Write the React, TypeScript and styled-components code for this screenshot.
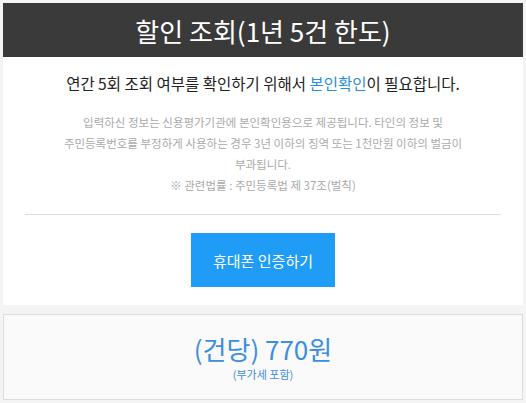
import React from 'react'
import styled, { createGlobalStyle } from 'styled-components'

const Global = createGlobalStyle`
  html, body {
    margin: 0;
    padding: 0;
    background: #f4f4f4;
  }
  body {
    font-family: "Noto Sans CJK KR", "Noto Sans", sans-serif;
  }
`
const Page = styled.div`
  padding: 3px 3px 3px 3px;
  min-height: 403px;
  box-sizing: border-box;
`
const Header = styled.h1`
  margin: 0;
  height: 54px;
  background: #3a3a3a;
  color: #fff;
  font-size: 26px;
  font-weight: 400;
  display: flex;
  align-items: center;
  justify-content: center;
`
const Card = styled.div`
  background: #fff;
  padding: 0 22px 18px;
`
const Lead = styled.p`
  margin: 0;
  padding-top: 15px;
  text-align: center;
  font-size: 15.5px;
  color: #222;
  line-height: 22px;
`
const Link = styled.span`
  color: #2a8ee0;
`
const Notice = styled.div`
  margin-top: 18px;
  text-align: center;
  font-size: 11.5px;
  line-height: 21px;
  color: #aaa;
  padding-bottom: 18px;
  border-bottom: 1px solid #ddd;
`
const Line = styled.p`
  margin: 0;
`
const ButtonRow = styled.div`
  display: flex;
  justify-content: center;
  padding-top: 18px;
`
const Button = styled.button`
  width: 144px;
  height: 54px;
  border: 0;
  background: #1e9cf6;
  color: #fff;
  font-family: inherit;
  font-size: 15px;
  cursor: pointer;
`
const Price = styled.div`
  margin-top: 9px;
  height: 86px;
  box-sizing: border-box;
  border: 1px solid #dcdcdc;
  background: #fafafa;
  display: flex;
  flex-direction: column;
  align-items: center;
  justify-content: center;
  color: #3d8ee0;
`
const Amount = styled.div`
  font-size: 26px;
  line-height: 30px;
`
const Vat = styled.div`
  margin-top: 3px;
  font-size: 11px;
  line-height: 14px;
`

const App = () => (
  <Page>
    <Global />
    <Header>할인 조회(1년 5건 한도)</Header>
    <Card>
      <Lead>
        연간 5회 조회 여부를 확인하기 위해서 <Link>본인확인</Link>이 필요합니다.
      </Lead>
      <Notice>
        <Line>입력하신 정보는 신용평가기관에 본인확인용으로 제공됩니다. 타인의 정보 및</Line>
        <Line>주민등록번호를 부정하게 사용하는 경우 3년 이하의 징역 또는 1천만원 이하의 벌금이</Line>
        <Line>부과됩니다.</Line>
        <Line>※ 관련법률 : 주민등록법 제 37조(벌칙)</Line>
      </Notice>
      <ButtonRow>
        <Button>휴대폰 인증하기</Button>
      </ButtonRow>
    </Card>
    <Price>
      <Amount>(건당) 770원</Amount>
      <Vat>(부가세 포함)</Vat>
    </Price>
  </Page>
)

export default App
